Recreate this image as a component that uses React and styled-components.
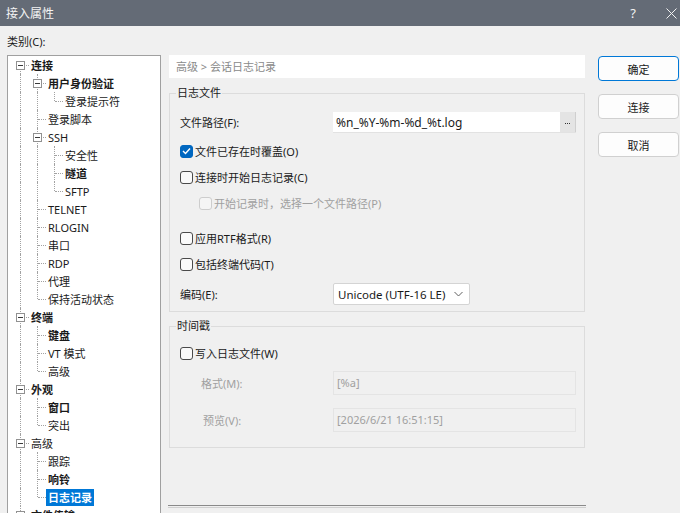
import React from 'react';
import styled, { createGlobalStyle } from 'styled-components';

const GlobalStyle = createGlobalStyle`
  html, body {
    margin: 0;
    padding: 0;
    height: 513px;
    overflow: hidden;
  }
  body {
    background: #f0f0f0;
    font-family: "Noto Sans", "Noto Sans CJK SC", sans-serif;
    font-size: 11px;
    color: #1a1a1a;
  }
`;

const Window = styled.div`
  width: 680px;
  height: 513px;
  display: flex;
  flex-direction: column;
  overflow: hidden;
`;

const TitleBar = styled.div`
  flex: 0 0 26px;
  display: flex;
  align-items: center;
  padding-left: 6px;
  background: #646b76;
  color: #f4f4f4;
  font-size: 12px;
`;

const TitleButtons = styled.div`
  margin-left: auto;
  display: flex;
  align-items: center;
`;

const TitleBtn = styled.span`
  width: ${p => p.$w || 22}px;
  height: 26px;
  display: flex;
  align-items: center;
  justify-content: center;
  margin-right: ${p => p.$gap || 0}px;
  font-size: 13px;
`;

const Body = styled.div`
  flex: 1;
  min-height: 0;
  display: flex;
  flex-direction: column;
  padding: 8px 2px 0 7px;
`;

const CategoryLabel = styled.div`
  height: 16px;
  line-height: 16px;
  margin-bottom: 5px;
`;

const Main = styled.div`
  display: flex;
  align-items: flex-start;
`;

const Tree = styled.div`
  flex: 0 0 154px;
  height: 470px;
  box-sizing: border-box;
  border: 1px solid #a0a0a0;
  background: #fff;
  padding-left: 4px;
  overflow: hidden;
`;

const TreeRow = styled.div`
  display: flex;
  align-items: center;
  height: 18px;
`;

const Guide = styled.span`
  position: relative;
  flex: 0 0 17px;
  height: 18px;
  &::before {
    content: '';
    display: ${p => (p.$up || p.$down ? 'block' : 'none')};
    position: absolute;
    left: 8px;
    top: ${p => (p.$up ? 0 : 9)}px;
    bottom: ${p => (p.$down ? 0 : 9)}px;
    border-left: 1px dotted #a2a2a2;
  }
  &::after {
    content: '';
    display: ${p => (p.$stub ? 'block' : 'none')};
    position: absolute;
    left: 9px;
    right: 0;
    top: 9px;
    border-top: 1px dotted #a2a2a2;
  }
`;

const Expander = styled.span`
  position: absolute;
  left: 4px;
  top: 5px;
  width: 9px;
  height: 9px;
  box-sizing: border-box;
  border: 1px solid #919191;
  background: #fff;
  z-index: 1;
  &::after {
    content: '';
    position: absolute;
    left: 1px;
    top: 3px;
    width: 5px;
    height: 1px;
    background: #3a3a3a;
  }
`;

const NodeLabel = styled.span`
  height: 17px;
  line-height: 17px;
  padding: 0 2px;
  white-space: nowrap;
  font-weight: ${p => (p.$bold ? 700 : 400)};
  background: ${p => (p.$selected ? '#0078d7' : 'transparent')};
  color: ${p => (p.$selected ? '#fff' : '#1a1a1a')};
`;

const Panel = styled.div`
  flex: 0 0 415px;
  margin-left: 8px;
  display: flex;
  flex-direction: column;
`;

const Breadcrumb = styled.div`
  height: 23px;
  line-height: 23px;
  padding-left: 7px;
  background: #fff;
  color: #8a8a8a;
`;

const Group = styled.fieldset`
  margin: ${p => p.$mt}px 0 0;
  padding: 0;
  border: 1px solid #dcdcdc;
  min-width: 0;
`;

const Legend = styled.legend`
  margin-left: 6px;
  padding: 0 1px;
  line-height: 16px;
  color: #1a1a1a;
`;

const GroupBody = styled.div`
  display: flex;
  flex-direction: column;
  padding: 0 8px ${p => p.$pb}px 10px;
`;

const FieldRow = styled.div`
  display: flex;
  align-items: center;
  height: ${p => p.$h || 22}px;
  margin-top: ${p => p.$mt || 0}px;
`;

const FieldLabel = styled.span`
  flex: 0 0 ${p => 153 - (p.$indent || 0)}px;
  padding-left: ${p => p.$indent || 0}px;
  color: ${p => (p.$disabled ? '#a0a0a0' : '#1a1a1a')};
`;

const PathInput = styled.div`
  flex: 0 0 243px;
  height: 21px;
  display: flex;
  background: #fff;
  border-bottom: 1px solid #e2e2e2;
  box-sizing: border-box;
`;

const PathText = styled.span`
  flex: 1;
  padding-left: 3px;
  line-height: 21px;
  font-size: 12px;
`;

const BrowseBtn = styled.span`
  flex: 0 0 16px;
  background: #e4e4e4;
  border-right: 1px solid #cfcfcf;
  display: flex;
  align-items: center;
  justify-content: center;
  gap: 1px;
  padding-top: 4px;
  box-sizing: border-box;
`;

const Dot = styled.i`
  width: 1px;
  height: 1px;
  background: #333;
`;

const Select = styled.div`
  flex: 0 0 137px;
  height: 22px;
  box-sizing: border-box;
  display: flex;
  align-items: center;
  justify-content: space-between;
  padding: 0 6px 0 4px;
  background: #fff;
  border: 1px solid #d4d4d4;
  border-radius: 2px;
  font-size: 11.5px;
`;

const DisabledField = styled.div`
  flex: 0 0 243px;
  height: 24px;
  box-sizing: border-box;
  padding: 3px 0 0 3px;
  line-height: 16px;
  border: 1px solid #e4e4e4;
  background: #f0f0f0;
  color: #a0a0a0;
`;

const CheckRow = styled.label`
  display: flex;
  align-items: center;
  height: 26px;
  margin-top: ${p => p.$mt || 0}px;
  padding-left: ${p => p.$indent || 0}px;
  color: ${p => (p.$disabled ? '#a0a0a0' : '#1a1a1a')};
`;

const Box = styled.span`
  width: 13px;
  height: 13px;
  box-sizing: border-box;
  border-radius: 3px;
  border: 1px solid ${p => (p.$checked ? '#0067c0' : p.$disabled ? '#cdcdcd' : '#4a4a4a')};
  background: ${p => (p.$checked ? '#0067c0' : p.$disabled ? '#f5f5f5' : '#fafafa')};
  display: flex;
  align-items: center;
  justify-content: center;
  margin-right: 2px;
`;

const Separator = styled.div`
  margin-top: 57px;
  height: 1px;
  border-top: 1px solid #8a8a8a;
  border-bottom: 1px solid #d0d0d0;
  margin-left: -1px;
  margin-right: -1px;
`;

const ButtonColumn = styled.div`
  flex: 0 0 81px;
  margin-left: 13px;
  margin-top: 1px;
  display: flex;
  flex-direction: column;
  gap: 13px;
`;

const Button = styled.button`
  height: 25px;
  box-sizing: border-box;
  border: 1px solid ${p => (p.$primary ? '#0078d7' : '#d0d0d0')};
  border-radius: 4px;
  background: #fdfdfd;
  font: inherit;
  color: #1a1a1a;
  padding: 0;
`;

const TREE = [
  { t: '连接', d: 0, b: 1, exp: 1 },
  { t: '用户身份验证', d: 1, b: 1, exp: 1 },
  { t: '登录提示符', d: 2 },
  { t: '登录脚本', d: 1 },
  { t: 'SSH', d: 1, exp: 1 },
  { t: '安全性', d: 2 },
  { t: '隧道', d: 2, b: 1 },
  { t: 'SFTP', d: 2 },
  { t: 'TELNET', d: 1 },
  { t: 'RLOGIN', d: 1 },
  { t: '串口', d: 1 },
  { t: 'RDP', d: 1 },
  { t: '代理', d: 1 },
  { t: '保持活动状态', d: 1 },
  { t: '终端', d: 0, b: 1, exp: 1 },
  { t: '键盘', d: 1, b: 1 },
  { t: 'VT 模式', d: 1 },
  { t: '高级', d: 1 },
  { t: '外观', d: 0, b: 1, exp: 1 },
  { t: '窗口', d: 1, b: 1 },
  { t: '突出', d: 1 },
  { t: '高级', d: 0, exp: 1 },
  { t: '跟踪', d: 1 },
  { t: '响铃', d: 1, b: 1 },
  { t: '日志记录', d: 1, b: 1, sel: 1 },
  { t: '文件传输', d: 0, b: 1, exp: 1 },
];

function continues(i, level) {
  for (let j = i + 1; j < TREE.length; j++) {
    if (TREE[j].d < level) return false;
    if (TREE[j].d === level) return true;
  }
  return false;
}

function CheckMark() {
  return (
    <svg width="9" height="8" viewBox="0 0 9 8">
      <polyline points="1,4 3.5,6.5 8,1.5" fill="none" stroke="#fff" strokeWidth="1.4" />
    </svg>
  );
}

function Check({ label, checked, disabled, mt, indent }) {
  return (
    <CheckRow $mt={mt} $indent={indent} $disabled={disabled}>
      <Box $checked={checked} $disabled={disabled}>{checked && <CheckMark />}</Box>
      {label}
    </CheckRow>
  );
}

function TreeView() {
  return (
    <Tree>
      {TREE.map((it, i) => {
        const guides = [];
        for (let l = 0; l < it.d; l++) {
          const c = continues(i, l);
          guides.push(<Guide key={l} $up={c} $down={c} />);
        }
        return (
          <TreeRow key={i}>
            {guides}
            <Guide $up={i > 0} $down={continues(i, it.d)} $stub>
              {it.exp ? <Expander /> : null}
            </Guide>
            <NodeLabel $bold={it.b} $selected={it.sel}>{it.t}</NodeLabel>
          </TreeRow>
        );
      })}
    </Tree>
  );
}

export default function App() {
  return (
    <Window>
      <GlobalStyle />
      <TitleBar>
        接入属性
        <TitleButtons>
          <TitleBtn $gap={18}>?</TitleBtn>
          <TitleBtn $w={18}>
            <svg width="11" height="11" viewBox="0 0 11 11">
              <path d="M0.5 0.5 L10.5 10.5 M10.5 0.5 L0.5 10.5" stroke="#f2f2f2" strokeWidth="1" />
            </svg>
          </TitleBtn>
        </TitleButtons>
      </TitleBar>
      <Body>
        <CategoryLabel>类别(C):</CategoryLabel>
        <Main>
          <TreeView />
          <Panel>
            <Breadcrumb>高级 &gt; 会话日志记录</Breadcrumb>
            <Group $mt={7}>
              <Legend>日志文件</Legend>
              <GroupBody $pb={6}>
                <FieldRow $mt={10}>
                  <FieldLabel>文件路径(F):</FieldLabel>
                  <PathInput>
                    <PathText>%n_%Y-%m-%d_%t.log</PathText>
                    <BrowseBtn title="...">
                      <Dot />
                      <Dot />
                      <Dot />
                    </BrowseBtn>
                  </PathInput>
                </FieldRow>
                <Check mt={5} checked label="文件已存在时覆盖(O)" />
                <Check label="连接时开始日志记录(C)" />
                <Check indent={19} disabled label="开始记录时，选择一个文件路径(P)" />
                <Check mt={9} label="应用RTF格式(R)" />
                <Check label="包括终端代码(T)" />
                <FieldRow $mt={6}>
                  <FieldLabel>编码(E):</FieldLabel>
                  <Select>
                    Unicode (UTF-16 LE)
                    <svg width="9" height="6" viewBox="0 0 9 6">
                      <path d="M0.5 1 L4.5 5 L8.5 1" fill="none" stroke="#606060" strokeWidth="1" />
                    </svg>
                  </Select>
                </FieldRow>
              </GroupBody>
            </Group>
            <Group $mt={6}>
              <Legend>时间戳</Legend>
              <GroupBody $pb={15}>
                <Check mt={6} label="写入日志文件(W)" />
                <FieldRow $mt={5} $h={24}>
                  <FieldLabel $indent={21} $disabled>格式(M):</FieldLabel>
                  <DisabledField>[%a]</DisabledField>
                </FieldRow>
                <FieldRow $mt={13} $h={24}>
                  <FieldLabel $indent={23} $disabled>预览(V):</FieldLabel>
                  <DisabledField>[2026/6/21 16:51:15]</DisabledField>
                </FieldRow>
              </GroupBody>
            </Group>
            <Separator />
          </Panel>
          <ButtonColumn>
            <Button $primary>确定</Button>
            <Button>连接</Button>
            <Button>取消</Button>
          </ButtonColumn>
        </Main>
      </Body>
    </Window>
  );
}
